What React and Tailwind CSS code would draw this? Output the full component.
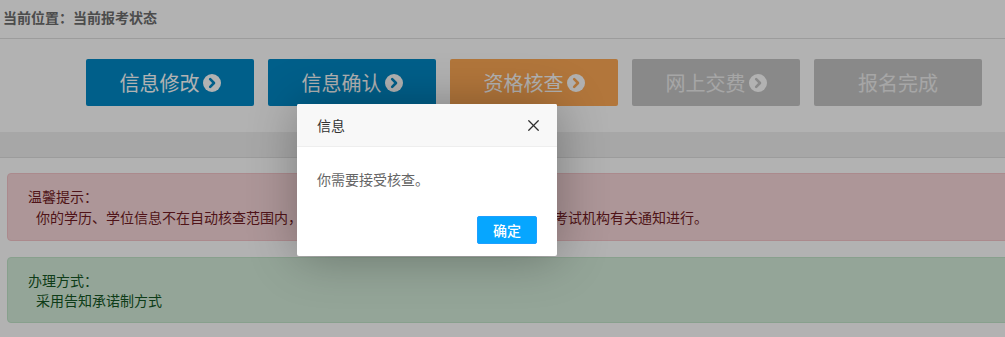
import { X } from 'lucide-react';

const STEPS = [
  { label: '信息修改', bg: 'bg-[#0089c6]', text: 'text-white', chevron: '#0089c6', icon: true },
  { label: '信息确认', bg: 'bg-[#0089c6]', text: 'text-white', chevron: '#0089c6', icon: true },
  { label: '资格核查', bg: 'bg-[#ffaa55]', text: 'text-white', chevron: '#ffaa55', icon: true },
  { label: '网上交费', bg: 'bg-[#c5c5c5]', text: 'text-[#eeeeee]', chevron: '#c5c5c5', icon: true },
  { label: '报名完成', bg: 'bg-[#c5c5c5]', text: 'text-[#eeeeee]', chevron: '#c5c5c5', icon: false },
];

const ChevronCircle = ({ color }) => (
  <svg width="18" height="18" viewBox="0 0 18 18" className="shrink-0">
    <circle cx="9" cy="9" r="9" fill="#ffffff" />
    <path d="M7.2 5.2 L11 9 L7.2 12.8" fill="none" stroke={color} strokeWidth="2.6" strokeLinecap="round" strokeLinejoin="round" />
  </svg>
);

export default function App() {
  return (
    <div className="relative h-[337px] w-[1005px] overflow-hidden bg-white font-['Noto_Sans_CJK_SC','Noto_Sans',sans-serif]">
      <div className="h-[39px] border-b border-[#e0e0e0] pl-[3px] text-[14px] font-bold leading-[34px] text-[#6e6e6e]">
        当前位置：当前报考状态
      </div>

      <div className="flex gap-[14px] pl-[86px] pt-[20px]">
        {STEPS.map(s => (
          <div key={s.label} className={`flex h-[47px] w-[168px] items-center justify-center gap-[3px] rounded-[2px] ${s.bg}`}>
            <span className={`text-[20px] leading-none ${s.text}`}>{s.label}</span>
            {s.icon && <ChevronCircle color={s.chevron} />}
          </div>
        ))}
      </div>

      <div className="mt-[26px] h-[26px] border-b border-[#e0e0e0] bg-[#f0f0f0]" />

      <div className="ml-[7px] mt-[15px] w-[1010px] rounded-[4px] border border-[#f5c6cb] bg-[#f8d7da] px-[20px] py-[12px] text-[14px] leading-[21px] text-[#721c24]">
        <div>温馨提示：</div>
        <div className="pl-[8px]">你的学历、学位信息不在自动核查范围内，需要进行人工核查，请按照报考所在地的考试机构有关通知进行。</div>
      </div>

      <div className="ml-[7px] mt-[16px] w-[1010px] rounded-[4px] border border-[#c3e6cb] bg-[#d4edda] px-[20px] py-[12px] text-[14px] leading-[20px] text-[#155724]">
        <div>办理方式：</div>
        <div className="pl-[8px]">采用告知承诺制方式</div>
      </div>

      {/* layer shade */}
      <div className="absolute inset-0 bg-black/30" />

      {/* dialog */}
      <div className="absolute left-[297px] top-[104px] w-[260px] rounded-[2px] bg-white shadow-[1px_1px_50px_rgba(0,0,0,0.3)]">
        <div className="flex h-[43px] items-center justify-between rounded-t-[2px] border-b border-[#eeeeee] bg-[#f8f8f8] pl-[20px] pr-[14px] text-[14px] text-[#333333]">
          <span>信息</span>
          <X className="h-[19px] w-[19px] text-[#2f2f2f]" strokeWidth={1.6} />
        </div>
        <div className="p-[20px] text-[14px] leading-[24px] text-[#666666]">你需要接受核查。</div>
        <div className="flex justify-end px-[15px] pb-[12px]">
          <button className="mx-[5px] mt-[5px] h-[28px] rounded-[2px] border border-[#1e9fff] bg-[#06a6ff] px-[15px] text-[14px] font-medium leading-[26px] text-white">
            确定
          </button>
        </div>
      </div>
    </div>
  );
}
